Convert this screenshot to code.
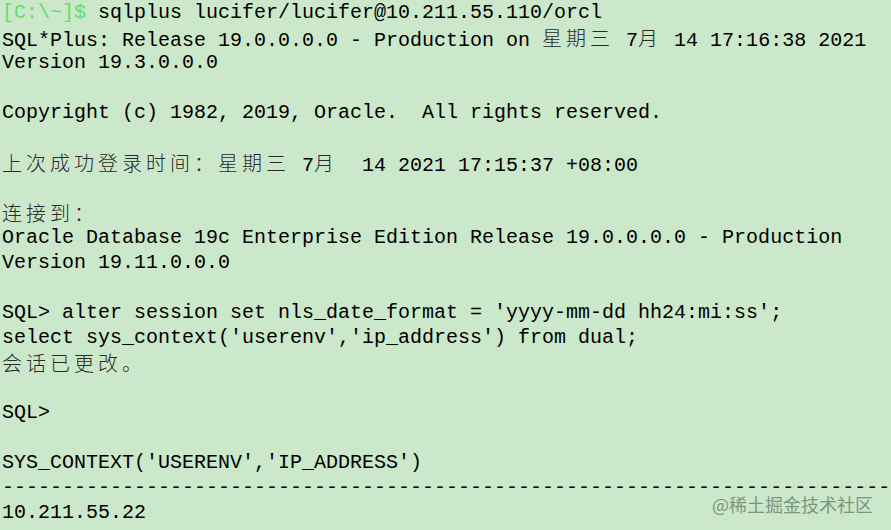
import React from "react";

const mono = "font-['Liberation_Mono','DejaVu_Sans_Mono',monospace]";

function Cjk({ children }) {
  return (
    <span className="font-['Noto_Sans_CJK_SC',sans-serif] font-light tracking-[4px] text-[#2a2a2a]">
      {children}
    </span>
  );
}

function Line({ children }) {
  return <div className="h-[25px] leading-[25px] whitespace-pre">{children}</div>;
}

export default function App() {
  const dashes = "-".repeat(74);

  return (
    <div className={`relative w-[891px] h-[530px] overflow-hidden bg-[#cbe8cb] text-[20px] text-black pl-[2px] ${mono}`}>
      <Line>
        <span className="text-[#66de66]">[C:\~]$</span> sqlplus lucifer/lucifer@10.211.55.110/orcl
      </Line>
      <Line>
        SQL*Plus: Release 19.0.0.0.0 - Production on <Cjk>星期三</Cjk> 7<Cjk>月</Cjk> 14 17:16:38 2021
      </Line>
      <Line>Version 19.3.0.0.0</Line>
      <Line> </Line>
      <Line>Copyright (c) 1982, 2019, Oracle.  All rights reserved.</Line>
      <Line> </Line>
      <Line>
        <Cjk>上次成功登录时间：星期三</Cjk> 7<Cjk>月</Cjk>  14 2021 17:15:37 +08:00
      </Line>
      <Line> </Line>
      <Line>
        <Cjk>连接到：</Cjk>
      </Line>
      <Line>Oracle Database 19c Enterprise Edition Release 19.0.0.0.0 - Production</Line>
      <Line>Version 19.11.0.0.0</Line>
      <Line> </Line>
      <Line>SQL&gt; alter session set nls_date_format = 'yyyy-mm-dd hh24:mi:ss';</Line>
      <Line>select sys_context('userenv','ip_address') from dual;</Line>
      <Line>
        <Cjk>会话已更改。</Cjk>
      </Line>
      <Line> </Line>
      <Line>SQL&gt;</Line>
      <Line> </Line>
      <Line>SYS_CONTEXT('USERENV','IP_ADDRESS')</Line>
      <Line>{dashes}</Line>
      <Line>10.211.55.22</Line>

      {/* watermark */}
      <div className="absolute right-[18px] bottom-[16px] font-['Noto_Sans_CJK_SC',sans-serif] text-[18px] leading-[20px] text-[#7d957f]">
        @稀土掘金技术社区
      </div>
    </div>
  );
}
